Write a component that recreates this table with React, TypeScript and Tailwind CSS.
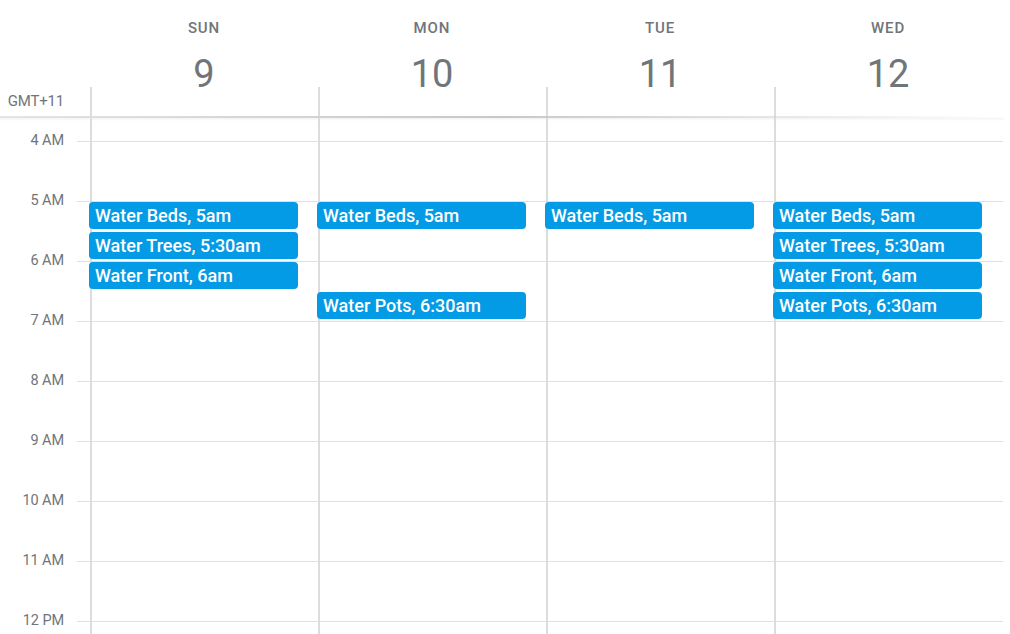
import React from "react";

type Ev = { title: string; start: number };

const days: { name: string; num: number; events: Ev[] }[] = [
  {
    name: "SUN",
    num: 9,
    events: [
      { title: "Water Beds, 5am", start: 5 },
      { title: "Water Trees, 5:30am", start: 5.5 },
      { title: "Water Front, 6am", start: 6 },
    ],
  },
  {
    name: "MON",
    num: 10,
    events: [
      { title: "Water Beds, 5am", start: 5 },
      { title: "Water Pots, 6:30am", start: 6.5 },
    ],
  },
  {
    name: "TUE",
    num: 11,
    events: [{ title: "Water Beds, 5am", start: 5 }],
  },
  {
    name: "WED",
    num: 12,
    events: [
      { title: "Water Beds, 5am", start: 5 },
      { title: "Water Trees, 5:30am", start: 5.5 },
      { title: "Water Front, 6am", start: 6 },
      { title: "Water Pots, 6:30am", start: 6.5 },
    ],
  },
];

const hours = ["4 AM", "5 AM", "6 AM", "7 AM", "8 AM", "9 AM", "10 AM", "11 AM", "12 PM"];

// grid top sits 23px above the 4 AM line, 60px per hour
const HOUR = 60;
const OFFSET = 23;

export default function App() {
  return (
    <div
      className="w-[1010px] h-[634px] overflow-hidden bg-white text-[#70757a]"
      style={{ fontFamily: "Roboto, 'Noto Sans', sans-serif" }}
    >
      {/* header */}
      <div className="relative flex h-[118px]">
        <div className="w-[90px] shrink-0 flex flex-col justify-end">
          <div className="h-[31px] pr-[26px] text-right text-[15px] leading-[28px] tracking-[-0.2px]">
            GMT+11
          </div>
        </div>
        {days.map((d) => (
          <div key={d.name} className="w-[228px] h-[118px] shrink-0 flex flex-col items-center">
            <div className="mt-[19px] text-[15px] leading-[18px] font-medium tracking-[0.9px]">
              {d.name}
            </div>
            <div className="mt-[24px] text-[38px] leading-[26px]">{d.num}</div>
            <div className="h-[31px] w-full border-l-2 border-[#dcdce0]" />
          </div>
        ))}
        <div className="absolute left-0 bottom-0 w-[1004px] h-[2px] bg-gradient-to-r from-[#e4e4e4] via-[#c8c8c8] to-transparent" />
        <div className="absolute left-0 bottom-[-3px] w-[1004px] h-[3px] bg-gradient-to-b from-[#0000000c] to-transparent" />
      </div>

      {/* body */}
      <div className="flex">
        <div className="w-[77px] shrink-0">
          <div className="h-[23px]" />
          {hours.map((h) => (
            <div key={h} className="h-[60px] pr-[13px] text-right text-[14.5px] leading-[16px] -mt-[8px] mb-[8px] tracking-[-0.1px]">
              {h}
            </div>
          ))}
        </div>
        <div className="relative w-[926px] shrink-0">
          <div className="h-[23px]" />
          {hours.map((h) => (
            <div key={h} className="h-[60px] border-t border-[#e0e0e0]" />
          ))}
          <div className="absolute inset-0 left-[13px] flex">
            {days.map((d) => (
              <div key={d.name} className="relative w-[228px] shrink-0 border-l-2 border-[#dcdce0]">
                {d.events.map((e) => (
                  <div
                    key={e.title}
                    className="absolute left-[-3px] w-[209px] h-[27px] rounded-[4px] bg-[#039be5] px-[6px] text-white text-[18px] font-medium leading-[27px] truncate"
                    style={{ top: OFFSET + (e.start - 4) * HOUR + 1 }}
                  >
                    {e.title}
                  </div>
                ))}
              </div>
            ))}
          </div>
        </div>
      </div>
    </div>
  );
}
